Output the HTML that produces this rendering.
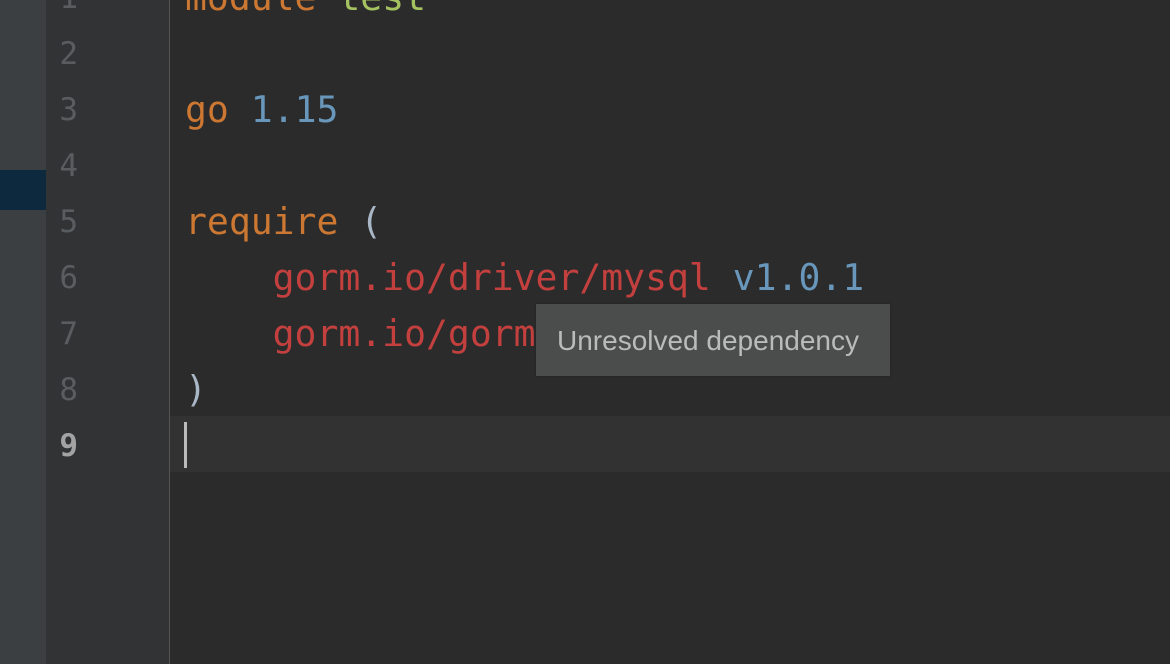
<!DOCTYPE html>
<html><head><style>
body{margin:0;width:1170px;height:664px;background:#2b2b2b;position:relative;overflow:hidden;font-family:"DejaVu Sans Mono","Liberation Mono",monospace;}
.strip{position:absolute;left:0;top:0;width:46px;height:664px;background:#3c3f41;}
.sel{position:absolute;left:0;top:170px;width:46px;height:40px;background:#0d293e;}
.gut{position:absolute;left:46px;top:0;width:123px;height:664px;background:#313335;}
.sep{position:absolute;left:169px;top:0;width:1px;height:664px;background:#555;}
.cur{position:absolute;left:170px;top:416px;width:1000px;height:56px;background:#323232;}
.ln{position:absolute;left:46px;width:32px;text-align:right;font-size:31px;color:#5a5d5f;line-height:56px;height:56px;}
.code{position:absolute;left:185px;font-size:36.4px;line-height:56px;height:56px;white-space:pre;}
.k{color:#cc7832}.s{color:#a5c261}.n{color:#6897bb}.r{color:#c3403f}.p{color:#a9b7c6}
.caret{position:absolute;left:184px;top:422px;width:3px;height:46px;background:#bbb;}
.tip{position:absolute;left:536px;top:304px;width:354px;height:72px;background:#4b4d4d;box-shadow:0 0 2px #222;color:#bbbbbb;font-family:"Liberation Sans",sans-serif;font-size:28px;line-height:74px;padding-left:21px;box-sizing:border-box;}
</style></head><body>
<div class="strip"></div><div class="sel"></div><div class="gut"></div><div class="sep"></div><div class="cur"></div>
<div class="ln" style="top:-30px">1</div>
<div class="ln" style="top:26px">2</div>
<div class="ln" style="top:82px">3</div>
<div class="ln" style="top:138px">4</div>
<div class="ln" style="top:194px">5</div>
<div class="ln" style="top:250px">6</div>
<div class="ln" style="top:306px">7</div>
<div class="ln" style="top:362px">8</div>
<div class="ln" style="top:418px;color:#a4a3a3;font-weight:bold">9</div>
<div class="code" style="top:-30px"><span class="k">module</span> <span class="s">test</span></div>
<div class="code" style="top:82px"><span class="k">go</span> <span class="n">1.15</span></div>
<div class="code" style="top:194px"><span class="k">require</span> <span class="p">(</span></div>
<div class="code" style="top:250px">    <span class="r">gorm.io/driver/mysql</span> <span class="n">v1.0.1</span></div>
<div class="code" style="top:306px">    <span class="r">gorm.io/gorm</span></div>
<div class="code" style="top:362px"><span class="p">)</span></div>
<div class="caret"></div>
<div class="tip">Unresolved dependency</div>
</body></html>
